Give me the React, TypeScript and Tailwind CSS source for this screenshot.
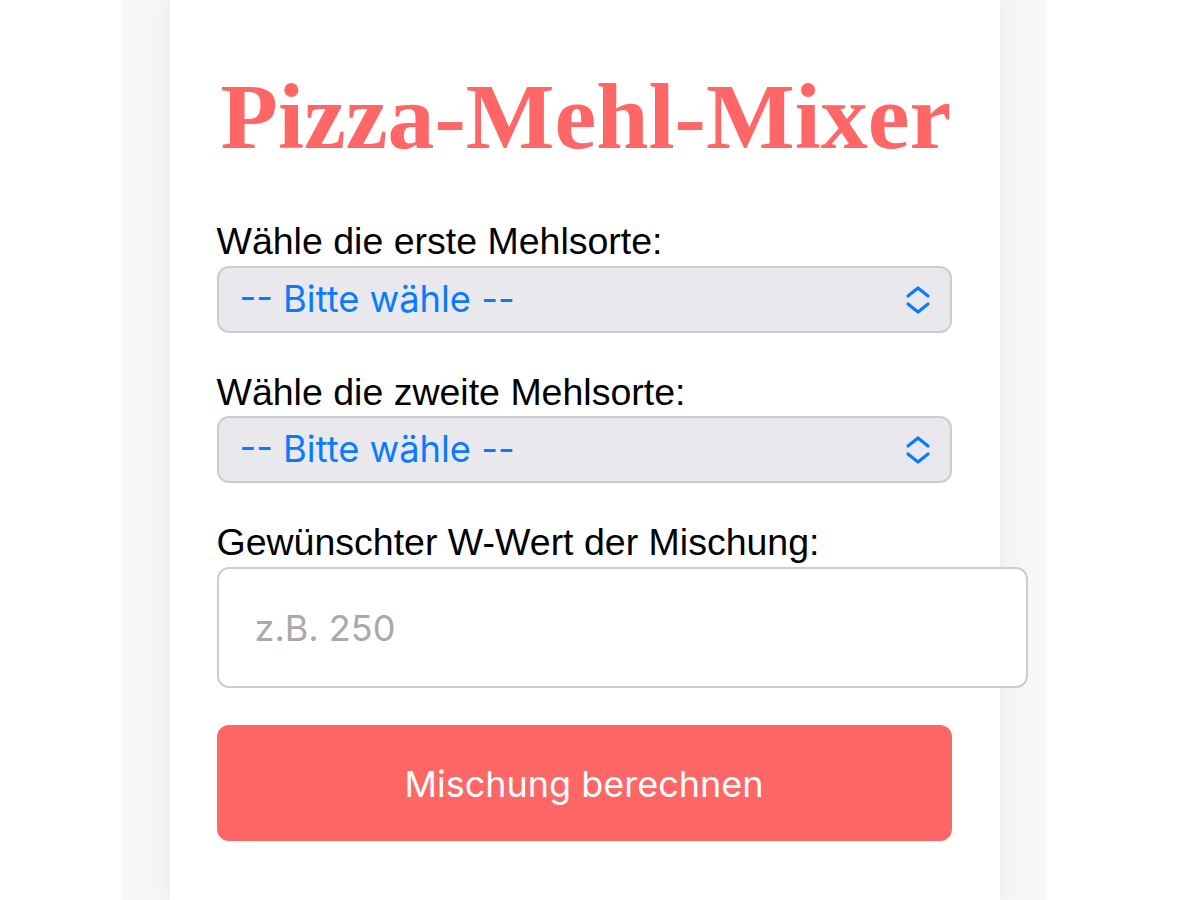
import { useState } from 'react';

const flours = ['Tipo 00', 'Tipo 0', 'Manitoba', 'Semola'];

function Chevrons() {
    return (
        <svg width="28" height="30" viewBox="0 0 28 30" fill="none" stroke="#0a7aff" strokeWidth="3.2" strokeLinecap="round" strokeLinejoin="round">
            <path d="M4 11 L14 3 L24 11" />
            <path d="M4 19 L14 27 L24 19" />
        </svg>
    );
}

function FlourSelect({ value, onChange }: { value: string; onChange: (v: string) => void }) {
    return (
        <div className="relative w-[735px]">
            <select
                value={value}
                onChange={(e) => onChange(e.target.value)}
                className="block h-[67px] w-full appearance-none rounded-[12px] border-2 border-[#cdcdcd] bg-[#e9e9ed] pl-[21px] text-[36.3px] text-[#0a7aff] outline-none"
                style={{ fontFamily: 'Inter, "Noto Sans", sans-serif' }}
            >
                <option value="">-- Bitte wähle --</option>
                {flours.map((f) => (
                    <option key={f} value={f}>{f}</option>
                ))}
            </select>
            <div className="pointer-events-none absolute right-[20px] top-[19px]">
                <Chevrons />
            </div>
        </div>
    );
}

export default function App() {
    const [first, setFirst] = useState('');
    const [second, setSecond] = useState('');
    const [w, setW] = useState('');

    return (
        <div className="min-h-[900px] bg-white">
            <div className="ml-[122px] w-[925px] bg-[#f7f7f7]">
                <div
                    className="mx-auto min-h-[900px] w-[830px] bg-white px-[47px] pt-[62px] shadow-[0_0_22px_rgba(0,0,0,0.07)]"
                    style={{ fontFamily: '"Liberation Sans", Arial, sans-serif' }}
                >
                    <h1
                        className="ml-[4px] text-[94px] font-bold leading-[108px] text-[#ff6666]"
                        style={{ fontFamily: '"Liberation Serif", "Times New Roman", serif' }}
                    >
                        Pizza-Mehl-Mixer
                    </h1>

                    <div className="mt-[50px] flex flex-col">
                        <label className="text-[37.5px] leading-[43px] text-black">Wähle die erste Mehlsorte:</label>
                        <div className="mt-[2.5px]">
                            <FlourSelect value={first} onChange={setFirst} />
                        </div>

                        <label className="mt-[38px] text-[37.5px] leading-[43px] text-black">Wähle die zweite Mehlsorte:</label>
                        <div className="mt-[2.5px]">
                            <FlourSelect value={second} onChange={setSecond} />
                        </div>

                        <label className="mt-[38px] text-[37.5px] leading-[43px] text-black">Gewünschter W-Wert der Mischung:</label>
                        <input
                            type="number"
                            value={w}
                            onChange={(e) => setW(e.target.value)}
                            placeholder="z.B. 250"
                            className="mt-[3px] block h-[121px] w-[811px] rounded-[12px] border-2 border-[#cdcdcd] bg-white pl-[36px] text-[36px] text-black outline-none placeholder:text-[#a9a9a9]"
                            style={{ fontFamily: 'Inter, "Noto Sans", sans-serif' }}
                        />

                        <button
                            className="mt-[37px] h-[116px] w-[735px] rounded-[12px] bg-[#ff6666] pt-[2px] text-[36px] text-white"
                            style={{ fontFamily: 'Inter, "Noto Sans", sans-serif' }}
                        >
                            Mischung berechnen
                        </button>
                    </div>
                </div>
            </div>
        </div>
    );
}
